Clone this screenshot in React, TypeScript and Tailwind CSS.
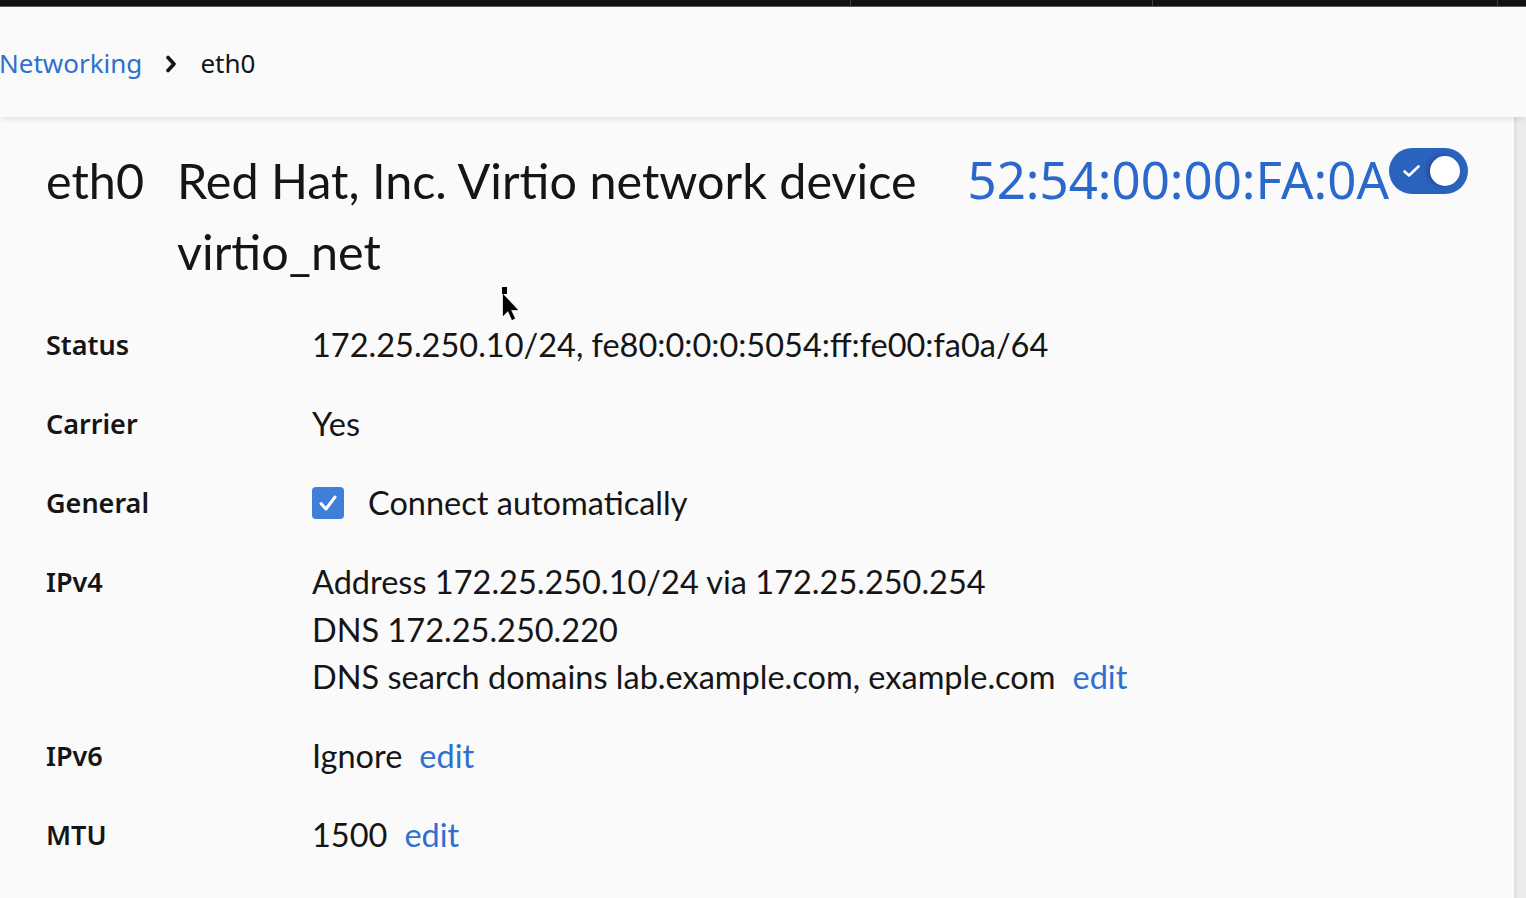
import React from "react";

// Row of the details table
type Row = {
  label: string;
  content: React.ReactNode;
};

const body = "font-['Noto_Sans',sans-serif]";

function EditLink() {
  return <a className="ml-[17px] text-[#2e70d0] cursor-pointer">edit</a>;
}

function Toggle() {
  return (
    <div className="relative w-[79px] h-[46px] shrink-0 rounded-full bg-[#2a63be] flex items-center justify-end pr-[8px]">
      <svg className="absolute left-[13px] top-[16px] w-[19px] h-[14px]" viewBox="0 0 19 14" fill="none">
        <path d="M2.5 7.5 L7 11.5 L16.5 2.5" stroke="white" strokeWidth={2.6} strokeLinecap="round" strokeLinejoin="round" />
      </svg>
      <div className="w-[30px] h-[30px] rounded-full bg-white shadow-[-3px_0_5px_rgba(0,0,0,0.25)]" />
    </div>
  );
}

export default function App() {
  const rows: Row[] = [
    { label: "Status", content: <div>172.25.250.10/24, fe80:0:0:0:5054:ff:fe00:fa0a/64</div> },
    { label: "Carrier", content: <div>Yes</div> },
    {
      label: "General",
      content: (
        <label className="flex items-center h-[47.5px]">
          <span className="w-[32px] h-[32px] rounded-[4px] bg-[#3d7fd9] flex items-center justify-center">
            <svg className="w-[22px] h-[22px]" viewBox="0 0 22 22" fill="none">
              <path d="M4 11.5 L9 17 L18 5" stroke="white" strokeWidth={3} strokeLinecap="round" strokeLinejoin="round" />
            </svg>
          </span>
          <span className="ml-[24px]">Connect automatically</span>
        </label>
      ),
    },
    {
      label: "IPv4",
      content: (
        <div>
          <div>Address 172.25.250.10/24 via 172.25.250.254</div>
          <div>DNS 172.25.250.220</div>
          <div>
            DNS search domains lab.example.com, example.com
            <EditLink />
          </div>
        </div>
      ),
    },
    {
      label: "IPv6",
      content: (
        <div>
          Ignore
          <EditLink />
        </div>
      ),
    },
    {
      label: "MTU",
      content: (
        <div>
          1500
          <EditLink />
        </div>
      ),
    },
  ];

  return (
    <div className={`w-[1526px] h-[898px] flex flex-col bg-[#f9faf9] text-[#151515] overflow-hidden ${body}`}>
      {/* top masthead strip */}
      <div className="h-[7px] shrink-0 flex bg-[#111312] border-b border-[#5b5d5c]">
        <div className="w-[850px]" />
        <div className="w-[302px] border-l border-[#3f4140]" />
        <div className="w-[345px] border-l border-[#3f4140]" />
        <div className="flex-1 border-l border-[#3f4140]" />
      </div>

      {/* breadcrumb */}
      <div className="relative z-10 h-[110px] shrink-0 flex items-center bg-[#f9faf9] shadow-[0_3px_6px_-1px_rgba(0,0,0,0.1)] text-[26px] pt-[3px]">
        <a className="text-[#2e70d0] -ml-[1px]">Networking</a>
        <svg className="w-[12px] h-[18px] ml-[23px] mr-[23px]" viewBox="0 0 12 18" fill="none">
          <path d="M3 2.5 L9 9 L3 15.5" stroke="#151515" strokeWidth={3.6} strokeLinecap="round" strokeLinejoin="round" />
        </svg>
        <span>eth0</span>
      </div>

      {/* main */}
      <div className="relative flex-1 flex min-h-0">
        <div className="flex-1 px-[46px] pt-[28px]">
          <div className="flex items-start leading-[71px]">
            <h2 className="font-['Lato',sans-serif] text-[48.5px] leading-[71px] shrink-0 [font-feature-settings:'zero']">eth0</h2>
            <div className="font-['Lato',sans-serif] text-[48.5px] leading-[71px] flex-1 ml-[33px] mr-[33px]">
              Red Hat, Inc. Virtio network device virtio_net
            </div>
            <div className="text-[51px] leading-[71px] text-[#2b68cb] shrink-0 -mt-[1px]">52:54:00:00:FA:0A</div>
            <div className="mt-[3px]">
              <Toggle />
            </div>
          </div>

          <div className="grid grid-cols-[266px_1fr] gap-y-[31.5px] mt-[34px]">
            {rows.map((row) => (
              <React.Fragment key={row.label}>
                <div className="text-[27px] font-semibold leading-[47.5px]">{row.label}</div>
                <div className="font-['Lato',sans-serif] text-[32.5px] leading-[47.5px]">{row.content}</div>
              </React.Fragment>
            ))}
          </div>
        </div>

        {/* scrollbar gutter */}
        <div className="w-[12px] shrink-0 bg-[#ececec] border-l-[3px] border-[#e2e2e2]" />

        {/* mouse pointer */}
        <svg className="absolute left-[500px] top-[170px] w-[24px] h-[36px]" viewBox="0 0 24 36" fill="none">
          <rect x="2" y="0" width="5" height="7" fill="black" />
          <path d="M3 7 L3 29 L8 24 L12 33 L15 31.5 L11 23 L18 23 Z" fill="black" stroke="rgba(0,0,0,0.25)" strokeWidth={1} />
        </svg>
      </div>
    </div>
  );
}
